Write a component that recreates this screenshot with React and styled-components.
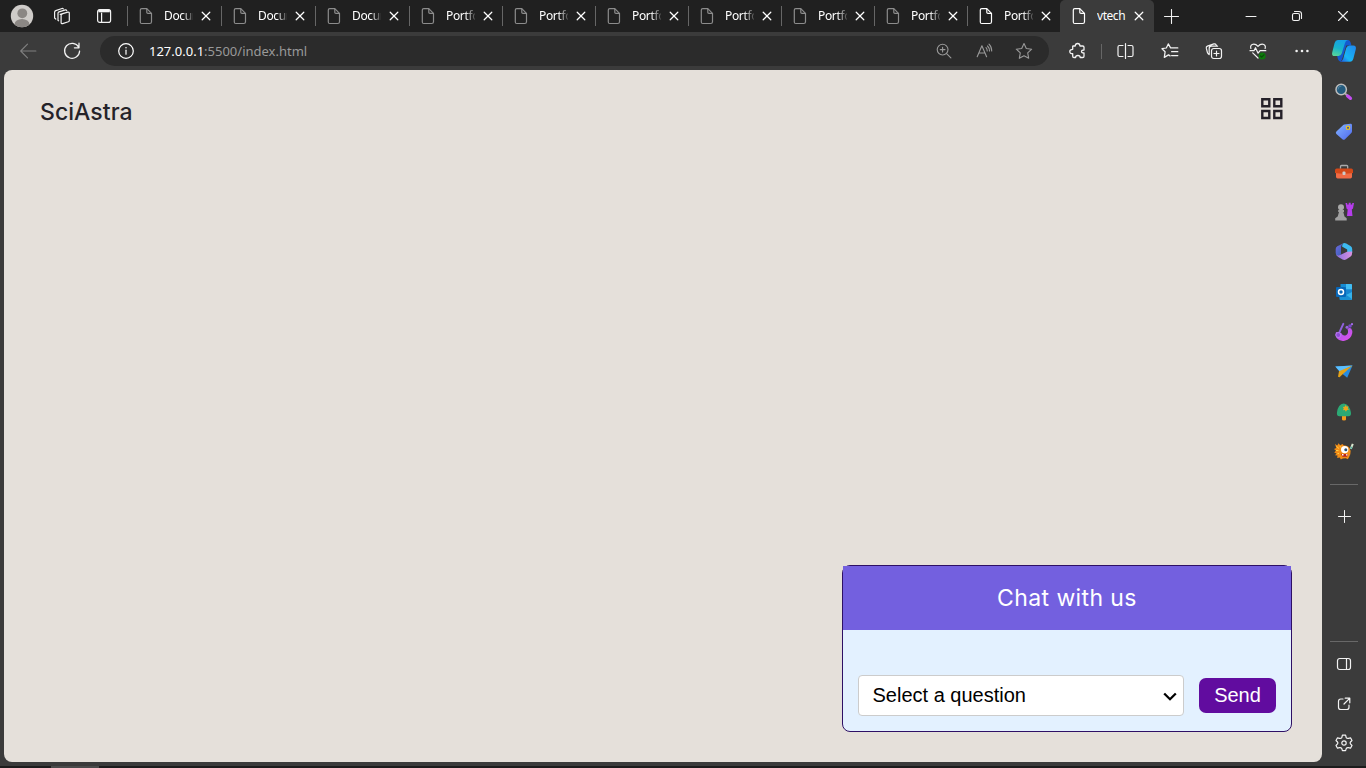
import React from "react";
import styled, { createGlobalStyle } from "styled-components";

const GlobalStyle = createGlobalStyle`
  * { box-sizing: border-box; }
  html, body { margin: 0; height: 100%; overflow: hidden; background: #3b3b3b; }
  body { font-family: "Noto Sans", "Open Sans", sans-serif; color: #fff; }
`;

const Window = styled.div`
  display: flex;
  flex-direction: column;
  width: 1366px;
  height: 768px;
  background: #3b3b3b;
`;

const TabStrip = styled.div`
  display: flex;
  height: 32px;
  background: #202020;
`;

const Slot = styled.div`
  display: flex;
  flex: none;
  align-items: center;
  justify-content: center;
  width: ${(p) => p.$w || 44}px;
  height: ${(p) => p.$h || 38}px;
  color: ${(p) => p.$color || "#f2f2f2"};
`;

const StripLead = styled.div`
  display: flex;
  width: 127px;
`;

const Tab = styled.div`
  display: flex;
  flex: none;
  align-items: center;
  width: ${(p) => p.$w}px;
  height: 32px;
  padding-left: ${(p) => (p.$active ? 12 : 11)}px;
  border-radius: 5px 5px 0 0;
  background: ${(p) => (p.$active ? "#3b3b3b" : "transparent")};
`;

const TabDivider = styled.div`
  flex: none;
  align-self: center;
  width: 1px;
  height: 20px;
  background: #666;
`;

const TabTitle = styled.div`
  width: 29px;
  margin: 0 7px 1px 11px;
  overflow: hidden;
  white-space: nowrap;
  font-size: 12px;
  line-height: 18px;
  letter-spacing: ${(p) => (p.$fade ? "-0.35px" : "-0.45px")};
  -webkit-mask-image: ${(p) => (p.$fade ? "linear-gradient(90deg, #000 65%, rgba(0,0,0,.15) 100%)" : "none")};
`;

const WindowControls = styled.div`
  display: flex;
  margin-left: auto;
`;

const Toolbar = styled.div`
  display: flex;
  align-items: center;
  height: 38px;
  padding-left: 6px;
`;

const AddressBar = styled.div`
  display: flex;
  align-items: center;
  width: 949px;
  height: 30px;
  margin: 0 6px;
  padding: 0 5px 0 18px;
  border-radius: 15px;
  background: #2b2b2b;
`;

const Url = styled.div`
  margin-left: 15px;
  margin-right: auto;
  font-size: 13px;
  line-height: 20px;
  color: #999;
  span { color: #fff; }
`;

const ToolDivider = styled.div`
  width: 1px;
  height: 15px;
  margin: 0 2px;
  background: #666;
`;

const Main = styled.div`
  display: flex;
  height: 692px;
  padding-left: 4px;
`;

const Page = styled.main`
  display: flex;
  flex-direction: column;
  justify-content: space-between;
  width: 1318px;
  padding: 27px 30px 30px 36px;
  border-radius: 8px;
  background: #e5e0da;
`;

const SiteHeader = styled.header`
  display: flex;
  justify-content: space-between;
  padding-right: 8px;
`;

const Brand = styled.div`
  font: 500 23px/31px Inter, sans-serif;
  letter-spacing: 0.05px;
  color: #252329;
`;

const Chat = styled.section`
  display: flex;
  flex-direction: column;
  align-self: flex-end;
  width: 450px;
  height: 167px;
  border: 1px solid #2e1065;
  border-radius: 8px;
  background: #e3f1ff;
`;

const ChatTitle = styled.div`
  height: 64px;
  text-align: center;
  font: 400 23px/64px Inter, sans-serif;
  letter-spacing: 0.4px;
  color: #fff;
  background: #7360df;
`;

const ChatForm = styled.div`
  display: flex;
  align-items: center;
  justify-content: space-between;
  margin-top: auto;
  padding: 0 15px 15px;
`;

const QuestionSelect = styled.div`
  display: flex;
  align-items: center;
  justify-content: space-between;
  width: 326px;
  height: 41px;
  padding: 0 5px 0 13.5px;
  border: 1px solid #ccc;
  border-radius: 4px;
  background: #fff;
  color: #000;
  font: 20px "Liberation Sans", sans-serif;
`;

const SendButton = styled.button`
  width: 77px;
  height: 35px;
  padding: 0 0 1px;
  border: 0;
  border-radius: 7px;
  background: #610c9f;
  color: #fff;
  font: 20px/24px "Liberation Sans", sans-serif;
`;

const Sidebar = styled.aside`
  display: flex;
  flex-direction: column;
  align-items: center;
  width: 44px;
  padding-top: 2px;
`;

const SideDivider = styled.div`
  flex: none;
  width: 28px;
  height: 1px;
  margin: ${(p) => p.$m};
  background: #686868;
`;

const SideFoot = styled.div`
  display: flex;
  flex-direction: column;
  align-items: center;
  margin-top: auto;
`;

const Taskbar = styled.div`
  height: 2px;
  margin-top: auto;
  padding-left: 51px;
  background: #1c1c1c;
`;

const TaskbarItem = styled.div`
  width: 48px;
  height: 2px;
  background: #4b4b4b;
`;

const Line = ({ s = 16, sw = 1.1, children }) => (
  <svg width={s} height={s} viewBox={`0 0 ${s} ${s}`} fill="none" stroke="currentColor"
    strokeWidth={sw} strokeLinecap="round" strokeLinejoin="round">{children}</svg>
);
const Art = ({ children, s = 20 }) => (
  <svg width={s} height={s} viewBox={`0 0 ${s} ${s}`}>{children}</svg>
);

const Avatar = () => (
  <svg width="24" height="24" viewBox="0 0 24 24">
    <defs><clipPath id="face"><circle cx="12" cy="12" r="11.2" /></clipPath></defs>
    <g clipPath="url(#face)">
      <rect width="24" height="24" fill="#cfccc9" />
      <circle cx="12.3" cy="9.3" r="4.9" fill="#8b8784" />
      <ellipse cx="12" cy="20.5" rx="7.5" ry="5.6" fill="#8b8784" />
    </g>
  </svg>
);

const Workspaces = () => (
  <Line s={18} sw={1.2}>
    <path d="M7.2 7.4 14.8 5.2q1.5-.3 1.5 1v7.2q0 1-1 1.4l-5.6 1.8q-1.6.4-1.6-1V8.4q0-.8 1-1.1" />
    <path d="M5.6 13.8 5 13.5V6.3q0-1 1-1.4l6.4-2q1-.2 1.3.7" />
    <path d="M2.8 12 1.6 11V5.2q0-1.2 1.2-1.6L9 1.5q1-.2 1.3.5" />
  </Line>
);
const TabActions = () => (
  <Line s={16} sw={1.2}>
    <rect x="1.6" y="1.6" width="13" height="12.8" rx="2.2" />
    <path d="M5.6 5v9.2" />
    <path d="M2.4 3h11.4" strokeWidth="2.6" strokeLinecap="butt" />
  </Line>
);
const FileIcon = ({ color = "#8c8c8c" }) => (
  <svg width="14" height="18" viewBox="0 0 14 18" fill="none" stroke={color} strokeWidth="1.2" strokeLinejoin="round">
    <path d="M2.8 1.6h5l4.7 4.8v8.3q0 1.8-1.8 1.8H2.8q-1.5 0-1.5-1.5v-12q0-1.4 1.5-1.4Z" />
    <path d="M7.8 1.8v3.4q0 1.2 1.2 1.2h3.3" />
  </svg>
);
const Cross = ({ n = 7.6, sw = 1.25 }) => {
  const a = 6 - n / 2;
  const b = 6 + n / 2;
  return <Line s={12} sw={sw}><path d={`M${a} ${a} ${b} ${b}M${b} ${a} ${a} ${b}`} /></Line>;
};
const Plus = ({ s = 14, sw = 1.1 }) => (
  <Line s={s} sw={sw}><path d={`M${s / 2} .5v${s - 1}M.5 ${s / 2}h${s - 1}`} /></Line>
);
const Star = ({ favs }) => (
  <Line s={18} sw={favs ? 1.25 : 1.1}>
    {favs ? (
      <path d="M16.8 5.9H9.6L7.3 1.9 5.3 6 1 6.7 4.1 9.8l-.8 5.6 4.2-2.5 1.6 1M10.6 9.7h6.2M10.6 13.5h6.2" />
    ) : <path d="m9 1.5 2.3 5 5.4.7-4 3.7 1 5.4L9 13.7l-4.7 2.6 1-5.4-4-3.7 5.4-.7Z" />}
  </Line>
);
const Back = () => <Line s={18}><path d="M8.5 2.2 1.7 9l6.8 6.8M1.7 9h15.2" /></Line>;
const Refresh = () => (
  <Line s={18} sw={1.25}><path d="M15.7 5.2A7.5 7.5 0 1 0 16.6 9M16 1.2v4.6h-4.6" /></Line>
);
const Info = () => (
  <Line s={16} sw={1.2}><circle cx="8" cy="8" r="7.3" /><path d="M8 7.2v4" /><path d="M8 4.7v.1" strokeWidth="1.5" /></Line>
);
const ZoomIn = () => (
  <Line s={16}><circle cx="6.6" cy="6.6" r="5.4" /><path d="m10.6 10.6 4.3 4.3M4.2 6.6H9M6.6 4.2V9" /></Line>
);
const ReadAloud = () => (
  <Line s={18}><path d="m2.2 14.8 4.7-11 4.7 11M3.8 11h6.2M11 5.7q1.3 1.3 1.2 3.3M12.500 4q2 1.9 2 5M14 2.200q2.800 2.700 2.700 6.800" /></Line>
);
const Puzzle = () => (
  <Line s={18} sw={1.3}>
    <path d="M5 4h2.200q.2-2.500 2.400-2.500T12 4h2.700q1.300 0 1.300 1.300V8q-2.500-.1-2.500 1.500T16 11v3.200q0 1.300-1.300 1.300h-2.500q0-2-2.300-2t-2.300 2H6q-1.300 0-1.300-1.300v-2.500q-2.900 0-2.900-2.200t2.900-2.200V4.300Z" />
  </Line>
);
const Split = () => (
  <Line s={18} sw={1.2}><path d="M8.500 1.500v15M6 3.500H2.500q-1.500 0-1.500 1.500v8q0 1.500 1.500 1.500H6M11 3.500h3.500q1.500 0 1.500 1.500v8q0 1.500-1.500 1.500H11" /></Line>
);
const Collections = () => (
  <Line s={18} sw={1.2}>
    <rect x="6.5" y="6.5" width="10" height="10" rx="2.2" />
    <path d="M11.500 9v5M9 11.500h5" />
    <path d="M4.200 12.600q-1.500-.5-1.800-2.100L1.300 6.200q-.3-1.600 1.100-2.100l6.500-2.200q1.500-.4 2.200.9l.6 1.200M4.200 12.600V6.400q0-2.200 2.200-2.200h6.200" />
  </Line>
);
const Heart = () => (
  <Line s={18} sw={1.2}>
    <path d="M1.900 6.500C.9 4 2.500 2.100 4.800 2.100 7 2.100 8.200 3.400 9 4.300c.8-.9 2-2.200 4.200-2.200 2.300 0 3.900 1.900 2.900 4.400M3.700 10.900 9 16M1 8.700h4l1.500-3 2.600 5.500 2-2.500h5.700" />
    <circle cx="13.200" cy="14" r="3.500" fill="#0e7a0d" stroke="none" />
    <path d="m11.600 14 1.100 1.200 2.200-2.400" stroke="#0a4d0a" />
  </Line>
);
const Dots = () => (
  <svg width="16" height="16" fill="currentColor"><circle cx="2.6" cy="8" r="1.3" /><circle cx="8" cy="8" r="1.3" /><circle cx="13.4" cy="8" r="1.3" /></svg>
);
const Copilot = () => (
  <Art s={26}>
    <defs>
      <linearGradient id="cpA" x1=".5" y1="0" x2=".2" y2="1"><stop stopColor="#17a0e4" /><stop offset=".5" stopColor="#18b4cc" /><stop offset="1" stopColor="#58d59a" /></linearGradient>
      <linearGradient id="cpB" x1="0" y1="1" x2="1" y2="0"><stop stopColor="#2051e5" /><stop offset=".35" stopColor="#18b6f5" /><stop offset="1" stopColor="#2086ed" /></linearGradient>
    </defs>
    <path d="M13 2h4.200q1.900.1 2.400 2.400l.9 3.100h-5.300l-3.100 10.700Q11 22 9.600 23.700q-2-.2-2.700-2.600L5.900 17Z" fill="#1459cf" />
    <path d="M6.800 2h10q-2.200.6-2.900 3.200l-3.100 10.100Q9.900 18 7.500 18H3.600Q.4 18 1.200 14.400L3.600 5Q4.500 2 6.800 2Z" fill="url(#cpA)" />
    <path d="M18.600 7.400h3.700q3.300 0 2.500 3.800l-2.400 9.300q-1 3.200-3.400 3.200H9q2.500-.5 3.300-3.200L15.200 10q.8-2.600 3.400-2.600Z" fill="url(#cpB)" />
  </Art>
);

const Search = () => (
  <Art><path d="m11 11.500 3 2.500" stroke="#aaa" strokeWidth="2" /><path d="m13.700 14 2.700 2.300" stroke="#c34df0" strokeWidth="3.400" strokeLinecap="round" /><circle cx="7.200" cy="7.500" r="5.200" fill="#245b7e" stroke="#bdbdbd" strokeWidth="1.500" /><path d="M4 7.500A3.500 3.500 0 0 1 7.500 4" stroke="#5385a0" fill="none" /></Art>
);
const Tag = () => (
  <Art><defs><linearGradient id="tag" x2="1" y2="1"><stop stopColor="#83b5ff" /><stop offset="1" stopColor="#4f68ee" /></linearGradient></defs>
    <path d="M10.200 2.600 16.400 1.800q1.600-.2 1.600 1.400v6q0 1-.7 1.700l-6.300 6.300q-1.300 1.300-2.600 0L2.400 11.900q-1.200-1.300 0-2.400L9 3.300q.6-.6 1.200-.7Z" fill="url(#tag)" /><circle cx="14" cy="5.800" r="1.700" fill="#4557a5" stroke="#edc51d" strokeWidth="1.200" /></Art>
);
const Toolbox = () => (
  <Art><path d="M6.500 6.700V4.500q0-1 1-1h5.200q1 0 1 1v2.200" fill="none" stroke="#aaa" strokeWidth="1.300" /><path d="M2 10.500h16v4.200q0 1.700-1.700 1.700H3.700Q2 16.400 2 14.700Z" fill="#f06b45" /><path d="M2.600 6.600h14.800q1.600.2 1.600 1.800v2.700q-9 1.300-18 0V8.400q0-1.600 1.600-1.800Z" fill="#d34919" /><rect x="8.500" y="9.500" width="3" height="3.500" rx="1" fill="#ccc" /></Art>
);
const Chess = () => (
  <Art><path d="M11.500 1h1.700v1.500h1.500V.8h2v1.700h1.500V1H20l-1 5.500-1.200 1 .7 6.500H13l.7-6.500-1.200-1Z" fill="#b63dec" /><circle cx="7" cy="5.200" r="3" fill="#aaa" /><path d="M4.200 8h5.800v2H9.300l1.200 4.600 2.200 1.600v2.300H1.200v-2.300l2.500-1.600L5 10h-.8Z" fill="#a0a0a0" /></Art>
);
const Office = () => (
  <Art><defs><linearGradient id="off1" x2="1" y2="1"><stop stopColor="#7069df" /><stop offset="1" stopColor="#345fb5" /></linearGradient><linearGradient id="off2" x2="1"><stop stopColor="#8770e0" /><stop offset="1" stopColor="#da91df" /></linearGradient></defs>
    <path d="M8.800 1.500q1.800-.8 3.400 0l4.300 2.500q1.700 1 1.700 3v4l-5-1V7.500L8 4.500Z" fill="#3dbaf0" /><path d="M9 1.500Q6.700 3.500 7 6.500v6l-3 1.400q-2.200-.2-2.300-3V7q0-1.800 1.600-2.800Z" fill="url(#off1)" /><path d="m18.200 9.600-.3 2.800q-.2 1.500-1.600 2.400L12 17.500q-1.600.8-3.400 0l-4.400-2.600q-2-1.300-2.300-3 1 2.300 4.200 1.200L13 9.700Z" fill="url(#off2)" /></Art>
);
const Outlook = () => (
  <Art><path d="M6.500 2H17q1 0 1 1v7L12 14l-5.500-3Z" fill="#168bd2" /><path d="M12 2h5q1 0 1 1v4.500h-6Z" fill="#42bdf2" /><path d="M12 7.500h6V11l-4 2-2-1Z" fill="#1685d0" /><path d="m18 10-6 3v5h5q1 0 1-1Z" fill="#35b2ea" /><path d="M5 12h6l7 5q-.2 1-1.200 1H6.500q-1 0-1-1Z" fill="#198fd3" /><rect x="2" y="5" width="10" height="10" rx="1" fill="#0868b9" /><circle cx="7" cy="10" r="2.500" fill="none" stroke="#fff" strokeWidth="1.500" /></Art>
);
const Designer = () => (
  <Art><defs><linearGradient id="des" x2="1" y2="1"><stop stopColor="#9c5cf0" /><stop offset="1" stopColor="#e34ee8" /></linearGradient></defs><path d="M2 10q-1.500 3 .6 6 3 3.700 8 2.800Q17 17.500 18.300 11q.2-2.600-1.100-4.500-2-1.200-3.700.4 1.600 4.100-1.200 6T7.200 11Z" fill="url(#des)" /><path d="m9.300 1.800-4.600 10" stroke="#8f61dc" strokeWidth="2" strokeLinecap="round" /><circle cx="4.300" cy="13" r="2.500" fill="#8d4bd6" stroke="#c98df5" strokeWidth=".7" /><circle cx="13" cy="5.200" r="1.500" fill="#9862e2" /><circle cx="16" cy="4" r="1.800" fill="#7849c6" /><circle cx="18" cy="2.200" r="1.100" fill="#a66cec" /></Art>
);
const Plane = () => (
  <Art><path d="M1.300 4.500 18.500 3.500 13.200 15.800l-4-3.300Z" fill="#268ce2" /><path d="M1.300 4.500 18.500 3.500 5.700 9.700Z" fill="#5abfff" /><path d="M18.500 3.500 5 9.200l-1 5.500 1.500.5 3.200-3Z" fill="#e5a318" /></Art>
);
const Tree = () => (
  <Art><path d="M8 13h4v4.500q0 1-2 1t-2-1Z" fill="#f59b1b" /><path d="M9.700 1.500q5.500.5 7.200 8.700.7 4-2.600 4H5.500q-3.200 0-2.500-4Q4 2.300 9.700 1.500Z" fill="#2ca975" /><path d="m11.500 3 1 1.600 2-.2-.7 1.800L15 7.700l-2 .3-1.100 1.800-1-1.700-2 .1.900-1.700-1-1.500 1.900-.3Z" fill="#efa51d" /></Art>
);
const Monster = () => (
  <Art><path d="m1 2 2.300 1.600L4.500 1.200l1.700 2.100L8.500 2l1.300 1.500q4-.6 5.800 2.500 1.800 3 .7 6.300l-1.300 3-1.200 2-2-1-3 .2-2 1-1-2-2.600.6.3-2.500-2.500-.3 1.500-1.800L.2 10.500l1.800-1.700L0 7l2.300-1Z" fill="#f28c16" /><path d="m2.500 4.500 2.500 2M2 8.500h2.500m-1 3H5M6 4l.7 1.500" stroke="#ffcf43" /><circle cx="10.700" cy="7.600" r="3.700" fill="#fff" /><circle cx="11.800" cy="7.800" r="1.500" fill="#2e5277" /><path d="m6.800 11.800 7.400.4-1.200 2.500H8.500Z" fill="#b92319" /><path d="M8 12h1.500v1.500H8Zm4 .2h1.500v1.300H12Z" fill="#fff" /><path d="m16.800 6.800 2-5" stroke="#dbe7cf" strokeWidth="2" /><path d="m16.800 6.800.9-2" stroke="#54b4a0" strokeWidth="1.500" /></Art>
);
const Panel = () => <Line s={16} sw={1.2}><rect x="1.500" y="2.500" width="13" height="11" rx="2.200" /><path d="M10.500 2.500v11" /></Line>;
const External = () => <Line s={16} sw={1.2}><path d="M7 3H4.800Q2.500 3 2.500 5.300v5.900q0 2.300 2.300 2.300h5.900q2.300 0 2.300-2.300V9M9.200 2.200h4.600v4.600M13.600 2.400 8 8" /></Line>;
const Gear = () => (
  <Line s={18} sw={1.2}>
    <circle cx="9" cy="9" r="2.200" />
    <path d="M7.400 1.200h3.200l.6 2.400q.8 1.100 2.300.7l2-.5 1.500 2.700-1.500 1.500q-.9 1 0 1.900l1.500 1.600-1.500 2.700-2.200-.5q-1.400-.2-2.100.9l-.6 2.100H7.400l-.6-2.100q-.7-1.100-2.100-.9l-2.200.5L1 11.500l1.500-1.600q.9-.9 0-1.900L1 6.500l1.500-2.700 2 .5q1.500.4 2.300-.7Z" />
  </Line>
);
const GridIcon = () => (
  <svg width="23" height="23" viewBox="0 0 23 23" fill="none" stroke="#252129" strokeWidth="2.400">
    <path d="M1.300 2.300h7v7h-7ZM13.300 2.300h7v7h-7ZM1.300 14h7v7h-7ZM13.300 14h7v7h-7Z" />
  </svg>
);
const Chevron = () => <Line s={16} sw={2.3}><path d="M2.200 5.500 8 11.200l5.800-5.700" strokeLinecap="butt" strokeLinejoin="miter" /></Line>;

const tabs = [
  ...Array(3).fill({ title: "Document", w: 93 }),
  ...Array(6).fill({ title: "Portfolio", w: 92 }),
  { title: "Portfolio", w: 92, bright: true },
];
const sideApps = [Search, Tag, Toolbox, Chess, Office, Outlook, Designer, Plane, Tree, Monster];

export default function App() {
  return (
    <Window>
      <GlobalStyle />
      <TabStrip>
        <StripLead>
          <Slot $w={44} $h={32}><Avatar /></Slot>
          <Slot $w={36} $h={32}><Workspaces /></Slot>
          <Slot $w={47} $h={32}><TabActions /></Slot>
        </StripLead>
        {tabs.map((t, i) => (
          <React.Fragment key={i}>
            <TabDivider />
            <Tab $w={t.w}>
              <FileIcon color={t.bright ? "#fff" : undefined} />
              <TabTitle $fade>{t.title}</TabTitle>
              <Cross />
            </Tab>
          </React.Fragment>
        ))}
        <Tab $w={94} $active>
          <FileIcon color="#fff" /><TabTitle>vtech</TabTitle><Cross />
        </Tab>
        <Slot $w={35} $h={32}><Plus s={15} /></Slot>
        <WindowControls>
          <Slot $w={46} $h={32}><Line s={12} sw={1}><path d="M1 6.5h10" /></Line></Slot>
          <Slot $w={46} $h={32}><Line s={12}><rect x="1.5" y="3.5" width="7" height="7" rx="1.5" /><path d="M3.5 1.5H8q2.500 0 2.500 2.500v4.500" /></Line></Slot>
          <Slot $w={46} $h={32}><Cross n={9} sw={1.1} /></Slot>
        </WindowControls>
      </TabStrip>
      <Toolbar>
        <Slot $color="#808080"><Back /></Slot>
        <Slot><Refresh /></Slot>
        <AddressBar>
          <Info />
          <Url><span>127.0.0.1</span>:5500/index.html</Url>
          <Slot $w={40} $color="#999"><ZoomIn /></Slot>
          <Slot $w={40} $color="#999"><ReadAloud /></Slot>
          <Slot $w={40} $color="#999"><Star /></Slot>
        </AddressBar>
        <Slot><Puzzle /></Slot>
        <ToolDivider />
        <Slot><Split /></Slot>
        <Slot><Star favs /></Slot>
        <Slot><Collections /></Slot>
        <Slot><Heart /></Slot>
        <Slot><Dots /></Slot>
        <Slot $w={40}><Copilot /></Slot>
      </Toolbar>
      <Main>
        <Page>
          <SiteHeader><Brand>SciAstra</Brand><GridIcon /></SiteHeader>
          <Chat>
            <ChatTitle>Chat with us</ChatTitle>
            <ChatForm>
              <QuestionSelect role="combobox">Select a question<Chevron /></QuestionSelect>
              <SendButton>Send</SendButton>
            </ChatForm>
          </Chat>
        </Page>
        <Sidebar>
          {sideApps.map((AppIcon, i) => <Slot key={i} $h={40}><AppIcon /></Slot>)}
          <SideDivider $m="12px 0 11px" />
          <Slot $h={40} $w={42}><Plus s={13} sw={1} /></Slot>
          <SideFoot>
            <SideDivider $m="0 0 2px" />
            <Slot $h={40}><Panel /></Slot>
            <Slot $h={40}><External /></Slot>
            <Slot $h={38}><Gear /></Slot>
          </SideFoot>
        </Sidebar>
      </Main>
      <Taskbar><TaskbarItem /></Taskbar>
    </Window>
  );
}
